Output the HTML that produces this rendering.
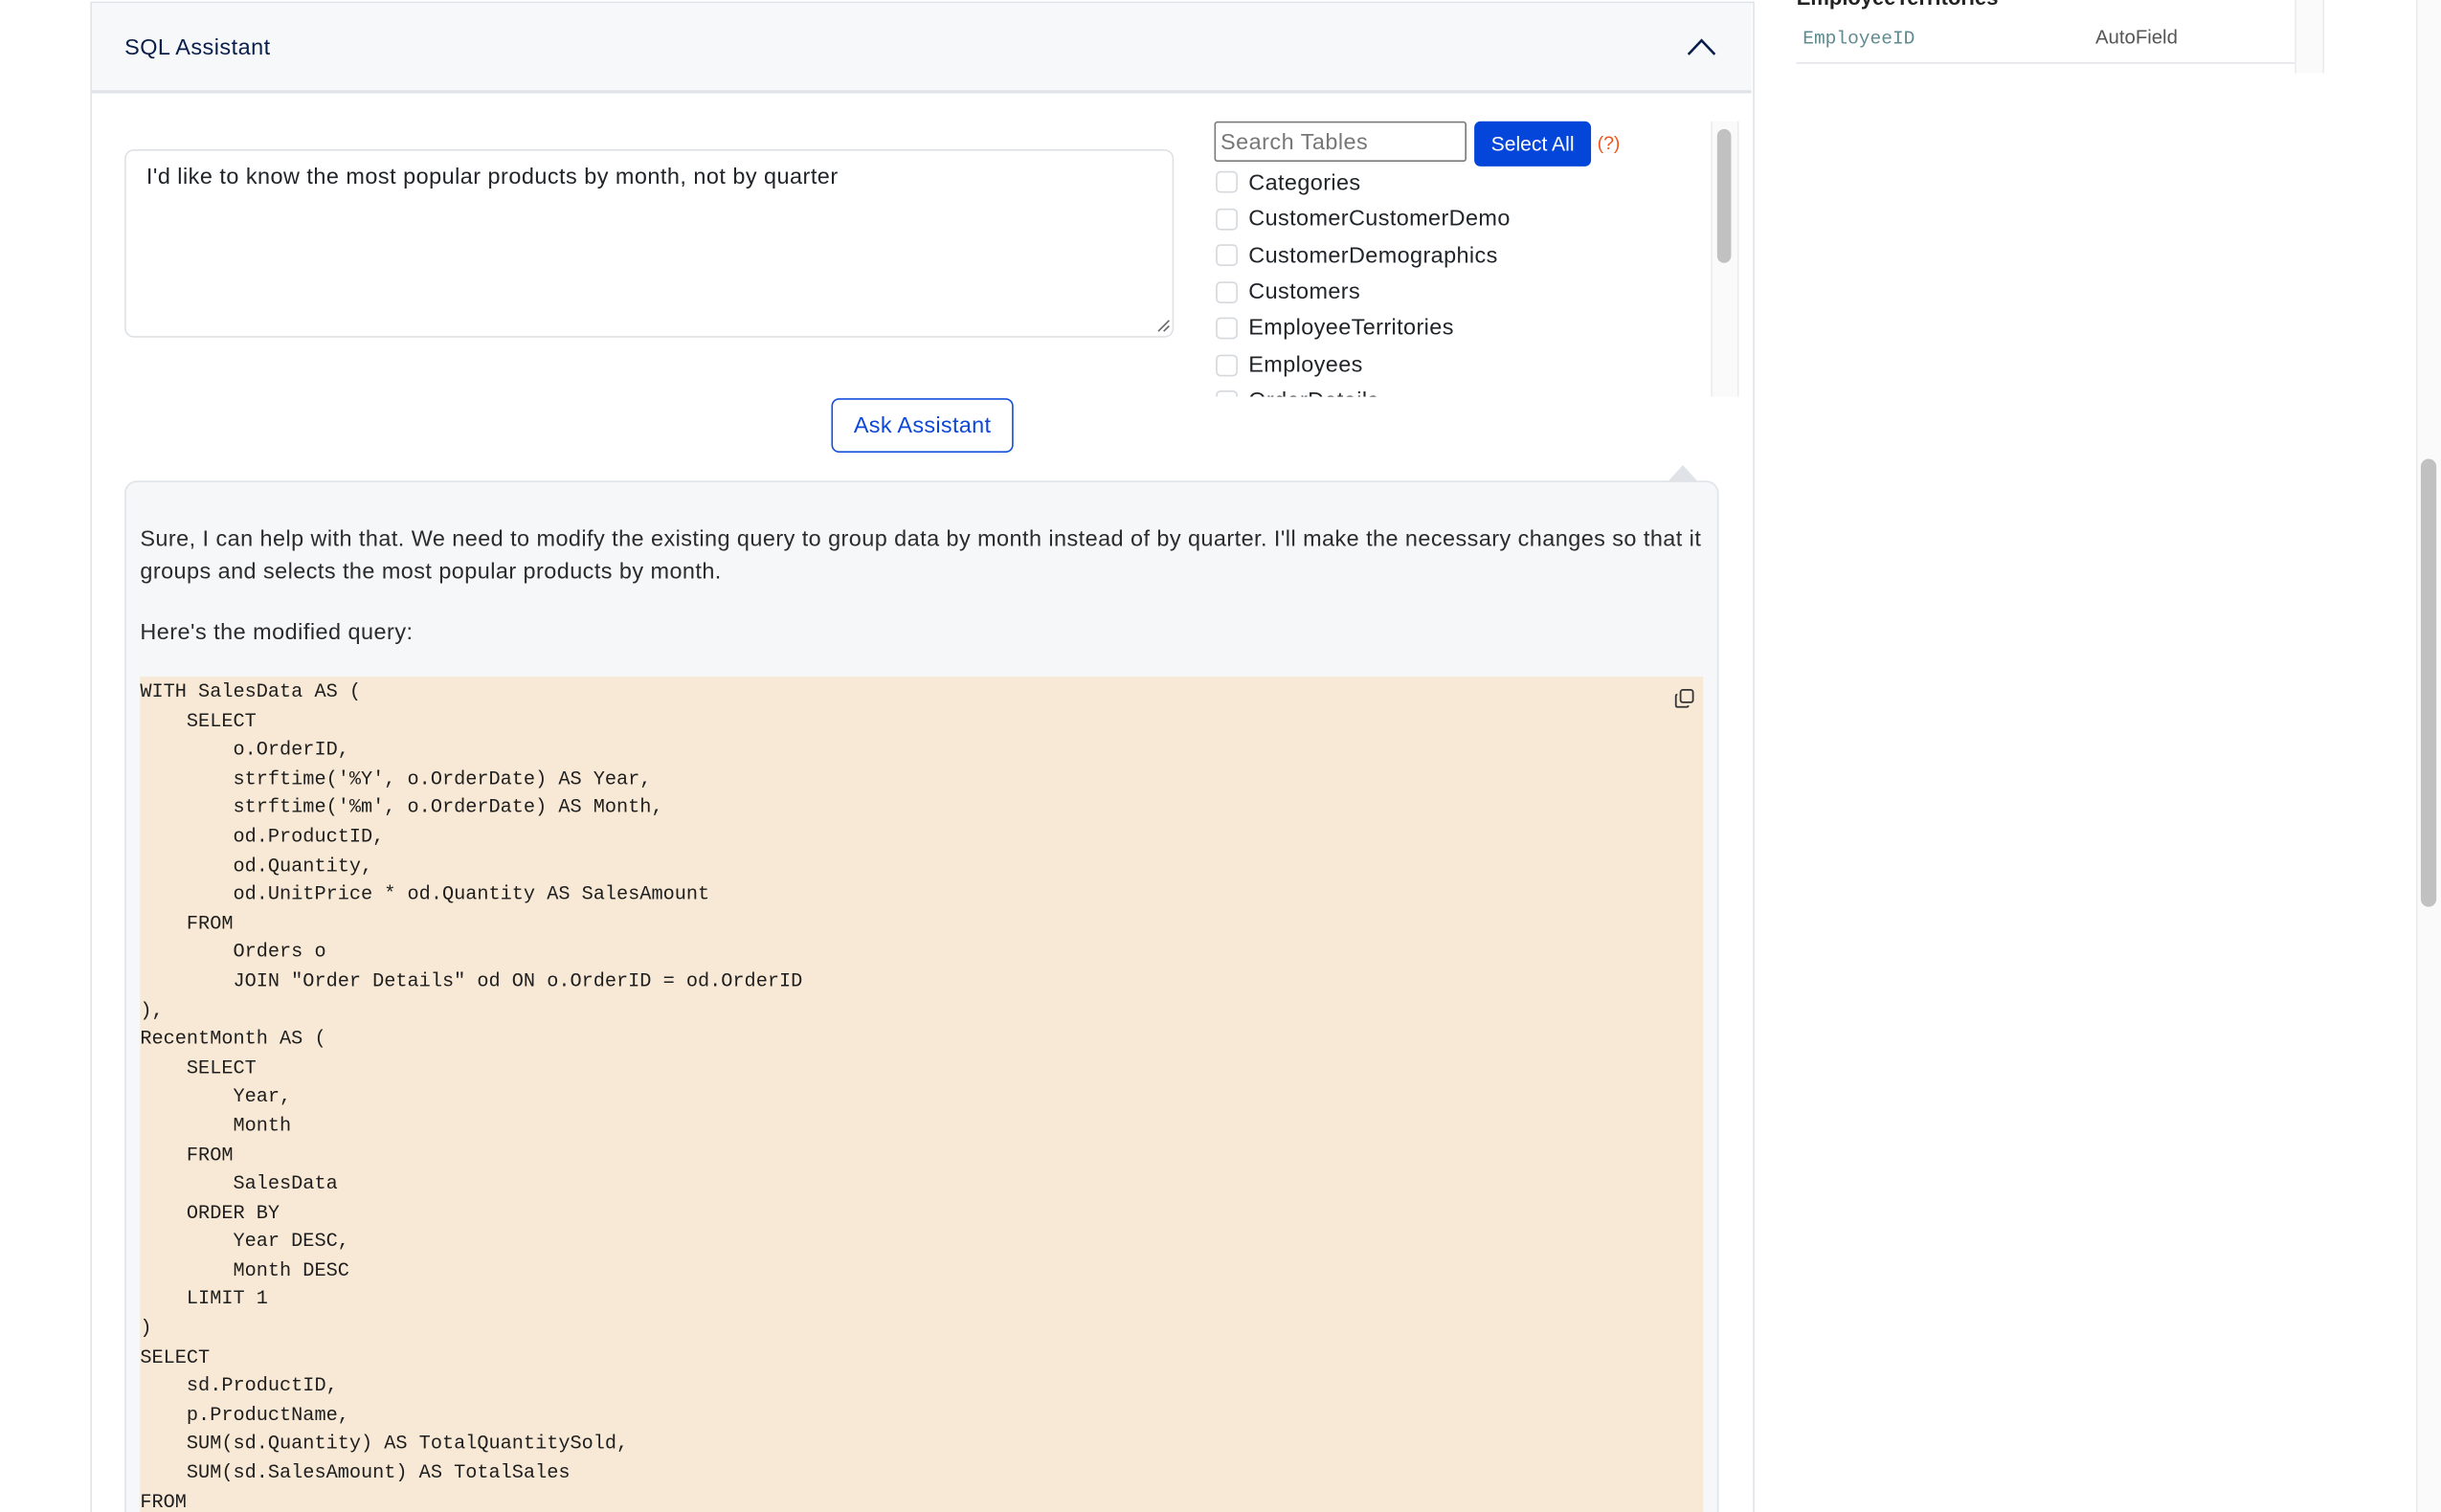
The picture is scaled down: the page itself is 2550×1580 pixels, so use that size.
<!DOCTYPE html>
<html><head><meta charset="utf-8"><style>
html,body{margin:0;padding:0;background:#fff;overflow:hidden;width:2550px;height:1580px}
#w{position:absolute;left:0;top:0;width:1568px;height:972px;overflow:hidden;transform:scale(1.6263,1.6255);transform-origin:0 0;font-family:"Liberation Sans",Arial,sans-serif}
.a{position:absolute}
.cb{position:absolute;left:781px;width:12px;height:12px;border:1px solid #d5d8dc;border-radius:3px;background:#fff}
.lb{position:absolute;left:802px;font-size:14.4px;letter-spacing:0.25px;color:#212529;line-height:17px}
.t{font-size:14.4px;letter-spacing:0.3px}
pre{margin:0;font-family:"Liberation Mono",monospace;font-size:12.45px;line-height:18.6px;color:#1e1e1e}
</style></head><body><div id="w">
<!-- card -->
<div class="a" style="left:58px;top:1px;width:1067px;height:990px;border:1px solid #e0e3e8;background:#fff"></div>
<div class="a" style="left:59px;top:2px;width:1066px;height:56px;background:#f7f8fa;border-bottom:2px solid #dfe2e6"></div>
<div class="a t" style="left:80px;top:22px;color:#0a1e4b;line-height:18px">SQL Assistant</div>
<svg class="a" style="left:1083px;top:24px" width="20" height="12" viewBox="0 0 20 12"><path d="M1.5 11 L10 2 L18.5 11" fill="none" stroke="#0a1e4b" stroke-width="1.6"/></svg>
<!-- textarea -->
<div class="a" style="left:80px;top:96px;width:672px;height:119px;border:1px solid #dee2e6;border-radius:6px;background:#fff"></div>
<div class="a t" style="left:94px;top:106px;color:#212529;line-height:17px">I'd like to know the most popular products by month, not by quarter</div>
<svg class="a" style="left:743px;top:205px" width="9" height="9"><path d="M1 8 L8 1 M4.5 8 L8 4.5" stroke="#666" stroke-width="1"/></svg>
<!-- search -->
<div class="a" style="left:780px;top:78px;width:160px;height:24px;border:1.5px solid #7a7a7a;border-radius:2px;background:#fff"></div>
<div class="a t" style="left:784px;top:84px;color:#777;line-height:17px">Search Tables</div>
<div class="a" style="left:947px;top:78px;width:75px;height:29px;background:#0546da;border-radius:4px;color:#fff;font-size:13px;line-height:29px;text-align:center">Select All</div>
<div class="a" style="left:1026px;top:85px;font-size:12px;color:#f0541a;line-height:14px">(?)</div>
<!-- list -->
<div class="a" style="left:775px;top:106px;width:330px;height:149px;overflow:hidden">
<div style="position:relative;left:-775px;top:-106px">
<div class="cb" style="top:110px"></div><div class="lb" style="top:110px">Categories</div>
<div class="cb" style="top:134px"></div><div class="lb" style="top:133px">CustomerCustomerDemo</div>
<div class="cb" style="top:157px"></div><div class="lb" style="top:157px">CustomerDemographics</div>
<div class="cb" style="top:181px"></div><div class="lb" style="top:180px">Customers</div>
<div class="cb" style="top:204px"></div><div class="lb" style="top:203px">EmployeeTerritories</div>
<div class="cb" style="top:228px"></div><div class="lb" style="top:227px">Employees</div>
<div class="cb" style="top:251px"></div><div class="lb" style="top:250px">OrderDetails</div>
</div></div>
<div class="a" style="left:1099px;top:78px;width:16px;height:177px;background:#fafafa;border-left:1px solid #ececec;border-right:1px solid #ececec"></div>
<div class="a" style="left:1103px;top:83px;width:9px;height:86px;background:#c1c1c1;border-radius:5px"></div>
<!-- ask -->
<div class="a t" style="left:534px;top:256px;width:115px;height:33px;border:1px solid #1550dc;border-radius:5px;color:#0d47d9;line-height:34px;text-align:center;letter-spacing:0.2px">Ask Assistant</div>
<!-- response -->
<svg class="a" style="left:1069px;top:298px" width="24" height="12"><path d="M2 12 L12 1 L22 12Z" fill="#dfe2e6"/></svg>
<div class="a" style="left:80px;top:309px;width:1022px;height:700px;background:#f6f7f9;border:1px solid #e0e3e8;border-radius:8px"></div>
<div class="a t" style="left:90px;top:337px;width:1010px;color:#2b2b2b;line-height:21px;letter-spacing:0.28px">Sure, I can help with that. We need to modify the existing query to group data by month instead of by quarter. I'll make the necessary changes so that it groups and selects the most popular products by month.</div>
<div class="a t" style="left:90px;top:397px;color:#2b2b2b;line-height:21px">Here's the modified query:</div>
<div class="a" style="left:90px;top:435px;width:1004px;height:560px;background:#f8e9d6"></div>
<pre class="a" style="left:90px;top:436px">WITH SalesData AS (
    SELECT
        o.OrderID,
        strftime('%Y', o.OrderDate) AS Year,
        strftime('%m', o.OrderDate) AS Month,
        od.ProductID,
        od.Quantity,
        od.UnitPrice * od.Quantity AS SalesAmount
    FROM
        Orders o
        JOIN "Order Details" od ON o.OrderID = od.OrderID
),
RecentMonth AS (
    SELECT
        Year,
        Month
    FROM
        SalesData
    ORDER BY
        Year DESC,
        Month DESC
    LIMIT 1
)
SELECT
    sd.ProductID,
    p.ProductName,
    SUM(sd.Quantity) AS TotalQuantitySold,
    SUM(sd.SalesAmount) AS TotalSales
FROM</pre>
<svg class="a" style="left:1075px;top:442px" width="14" height="14" viewBox="0 0 14 14"><rect x="4.5" y="1.5" width="8" height="8" rx="1.5" fill="none" stroke="#333" stroke-width="1.1"/><path d="M2.5 4.5 Q1.5 4.5 1.5 5.5 V11.5 Q1.5 12.5 2.5 12.5 H8.5 Q9.5 12.5 9.5 11.5" fill="none" stroke="#333" stroke-width="1.1"/></svg>
<!-- right panel -->
<div class="a" style="left:1154px;top:-9px;font-size:13.5px;font-weight:bold;color:#222;line-height:16px">EmployeeTerritories</div>
<div class="a" style="left:1158px;top:18px;font-family:'Liberation Mono',monospace;font-size:12px;color:#5f8a90;line-height:15px">EmployeeID</div>
<div class="a" style="left:1346px;top:17px;font-size:12.5px;color:#555;line-height:15px">AutoField</div>
<div class="a" style="left:1154px;top:40px;width:320px;height:1px;background:#e3e5ea"></div>
<div class="a" style="left:1474px;top:0;width:17px;height:47px;background:#fafafa;border-left:1px solid #ececec;border-right:1px solid #ececec"></div>
<!-- page scrollbar -->
<div class="a" style="left:1552px;top:0;width:16px;height:972px;background:#fafafa;border-left:1px solid #ececec"></div>
<div class="a" style="left:1555px;top:295px;width:10px;height:288px;background:#c1c1c1;border-radius:5px"></div>
</div></body></html>
